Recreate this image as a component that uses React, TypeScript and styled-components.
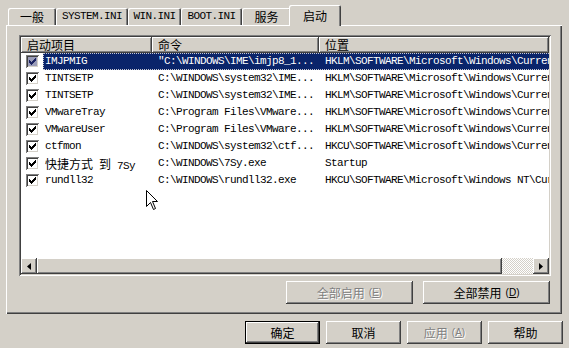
import React from 'react';
import styled, { createGlobalStyle, css } from 'styled-components';

const GlobalStyle = createGlobalStyle`
  html, body {
    margin: 0;
    padding: 0;
    background: #d4d0c8;
  }
  body {
    font-family: 'Noto Sans CJK SC', 'Liberation Sans', sans-serif;
    font-size: 12px;
    color: #000;
  }
`;

const mono = css`
  font-family: 'Liberation Mono', 'Noto Sans CJK SC', monospace;
  font-size: 11px;
  letter-spacing: -0.6px;
`;

const raised = css`
  box-shadow: inset -1px -1px #404040, inset 1px 1px #ffffff,
    inset -2px -2px #808080, inset 2px 2px #d4d0c8;
`;

const Page = styled.div`
  position: relative;
  width: 569px;
  height: 348px;
  padding-left: 6px;
  box-sizing: border-box;
  overflow: hidden;
  background: #d4d0c8;
`;

const TabStrip = styled.div`
  display: flex;
  align-items: flex-end;
  height: 25px;
  padding-left: 2px;
`;

const Tab = styled.div<{ $width: number; $active?: boolean }>`
  ${mono};
  position: relative;
  z-index: ${(p) => (p.$active ? 1 : 0)};
  box-sizing: border-box;
  width: ${(p) => p.$width + (p.$active ? 4 : 0)}px;
  height: ${(p) => (p.$active ? 21 : 17)}px;
  margin: ${(p) => (p.$active ? '0 -2px -1px -2px' : '0')};
  padding-top: ${(p) => (p.$active ? 3 : 1)}px;
  display: flex;
  justify-content: center;
  line-height: 15px;
  background: #d4d0c8;
  border-top-left-radius: 2px;
  border-top-right-radius: 2px;
  box-shadow: inset 1px 1px #ffffff, inset -1px 0 #404040, inset -2px 0 #808080;
`;

const Cjk = styled.span`
  font-family: 'Noto Sans CJK SC', sans-serif;
  font-size: 12px;
  letter-spacing: 0;
`;

const Panel = styled.div`
  width: 556px;
  height: 289px;
  box-sizing: border-box;
  padding: 10px 11px 10px 13px;
  display: flex;
  flex-direction: column;
  box-shadow: inset 1px 1px #ffffff, inset -1px -1px #404040,
    inset -2px -2px #808080;
`;

const ListView = styled.div`
  width: 532px;
  height: 241px;
  box-sizing: border-box;
  padding: 2px;
  display: flex;
  flex-direction: column;
  background: #d4d0c8;
  box-shadow: inset 1px 1px #808080, inset -1px -1px #ffffff,
    inset 2px 2px #404040, inset -2px -2px #d4d0c8;
`;

const ListInner = styled.div`
  flex: 1;
  display: flex;
  flex-direction: column;
  overflow: hidden;
  background: #ffffff;
`;

const HeaderRow = styled.div`
  display: flex;
  height: 16px;
  flex-shrink: 0;
`;

const HeaderCell = styled.div<{ $width?: number }>`
  box-sizing: border-box;
  ${(p) => (p.$width ? `width: ${p.$width}px;` : 'flex: 1;')}
  padding-left: 6px;
  line-height: 16px;
  background: #d4d0c8;
  white-space: nowrap;
  ${raised};
`;

const Rows = styled.div`
  flex: 1;
`;

const Row = styled.div`
  display: flex;
  height: 17px;
  white-space: nowrap;
`;

const CheckCell = styled.div`
  width: 22px;
  flex-shrink: 0;
  display: flex;
  align-items: center;
  padding-left: 5px;
  box-sizing: border-box;
`;

const CheckBox = styled.div<{ $dim?: boolean }>`
  width: 13px;
  height: 13px;
  box-sizing: border-box;
  display: flex;
  align-items: center;
  justify-content: center;
  background: ${(p) => (p.$dim ? '#9a9cb8' : '#ffffff')};
  color: ${(p) => (p.$dim ? '#1c2462' : '#000000')};
  box-shadow: inset 1px 1px #808080, inset -1px -1px #ffffff,
    inset 2px 2px #404040, inset -2px -2px #d4d0c8;
`;

const RowBody = styled.div<{ $selected?: boolean }>`
  flex: 1;
  display: flex;
  ${mono};
  line-height: 17px;
  background: ${(p) => (p.$selected ? '#0a246a' : 'transparent')};
  color: ${(p) => (p.$selected ? '#ffffff' : '#000000')};
  outline: ${(p) => (p.$selected ? '1px dotted #c8c8d0' : 'none')};
  outline-offset: -1px;
`;

const Cell = styled.div<{ $width?: number }>`
  box-sizing: border-box;
  ${(p) => (p.$width ? `width: ${p.$width}px; flex-shrink: 0;` : 'flex: 1;')}
  padding-left: ${(p) => (p.$width === 109 ? 2 : 6)}px;
  overflow: hidden;
`;

const HScroll = styled.div`
  display: flex;
  height: 16px;
  flex-shrink: 0;
  background: #d4d0c8;
`;

const ArrowBtn = styled.div`
  width: 16px;
  height: 16px;
  display: flex;
  align-items: center;
  justify-content: center;
  ${raised};
`;

const Thumb = styled.div<{ $width: number }>`
  width: ${(p) => p.$width}px;
  height: 16px;
  ${raised};
  background: #d4d0c8;
`;

const Track = styled.div`
  flex: 1;
  background: repeating-conic-gradient(#ffffff 0 25%, #d4d0c8 0 50%) 0 0 / 2px 2px;
`;

const ActionRow = styled.div`
  display: flex;
  justify-content: flex-end;
  gap: 10px;
  margin-top: 5px;
  padding-right: 1px;
`;

const Button = styled.div<{ $width: number; $default?: boolean; $disabled?: boolean }>`
  box-sizing: border-box;
  width: ${(p) => p.$width}px;
  height: 23px;
  display: flex;
  align-items: center;
  justify-content: center;
  line-height: 14px;
  background: #d4d0c8;
  color: ${(p) => (p.$disabled ? '#808080' : '#000000')};
  text-shadow: ${(p) => (p.$disabled ? '1px 1px #ffffff' : 'none')};
  ${(p) =>
    p.$default
      ? css`
          box-shadow: inset 0 0 0 1px #000000, inset -2px -2px #404040,
            inset 2px 2px #ffffff, inset -3px -3px #808080;
        `
      : raised};
`;

const Key = styled.span`
  font-family: 'Liberation Sans', sans-serif;
  font-size: 10px;
  margin-left: 4px;
`;

const Footer = styled.div`
  width: 557px;
  display: flex;
  justify-content: flex-end;
  gap: 6px;
  margin-top: 7px;
`;

const Cursor = styled.svg`
  position: absolute;
  left: 146px;
  top: 190px;
`;

// classic 7x7 pixel check mark
const Check = () => (
  <svg width="7" height="7" viewBox="0 0 7 7" shapeRendering="crispEdges">
    <path
      d="M0 2h1v1h1v1h1v-1h1v-1h1v-1h1v-1h1v3h-1v1h-1v1h-1v1h-1v1h-1v-1h-1v-1h-1v-1h-1z"
      fill="currentColor"
    />
  </svg>
);

const Arrow = ({ dir }: { dir: 'left' | 'right' }) => (
  <svg width="4" height="7" viewBox="0 0 4 7">
    <path d={dir === 'left' ? 'M4 0 L0 3.5 L4 7 Z' : 'M0 0 L4 3.5 L0 7 Z'} fill="#000" />
  </svg>
);

interface Item {
  name: React.ReactNode;
  cmd: string;
  loc: string;
}

const RUN_LM = 'HKLM\\SOFTWARE\\Microsoft\\Windows\\CurrentVersion\\Run';
const RUN_CU = 'HKCU\\SOFTWARE\\Microsoft\\Windows\\CurrentVersion\\Run';

const items: Item[] = [
  { name: 'IMJPMIG', cmd: '"C:\\WINDOWS\\IME\\imjp8_1...', loc: RUN_LM },
  { name: 'TINTSETP', cmd: 'C:\\WINDOWS\\system32\\IME...', loc: RUN_LM },
  { name: 'TINTSETP', cmd: 'C:\\WINDOWS\\system32\\IME...', loc: RUN_LM },
  { name: 'VMwareTray', cmd: 'C:\\Program Files\\VMware...', loc: RUN_LM },
  { name: 'VMwareUser', cmd: 'C:\\Program Files\\VMware...', loc: RUN_LM },
  { name: 'ctfmon', cmd: 'C:\\WINDOWS\\system32\\ctf...', loc: RUN_CU },
  {
    name: (
      <>
        <Cjk>快捷方式</Cjk> <Cjk>到</Cjk> 7Sy
      </>
    ),
    cmd: 'C:\\WINDOWS\\7Sy.exe',
    loc: 'Startup',
  },
  {
    name: 'rundll32',
    cmd: 'C:\\WINDOWS\\rundll32.exe',
    loc: 'HKCU\\SOFTWARE\\Microsoft\\Windows NT\\CurrentVersion\\Windows',
  },
];

const tabs = [
  { label: <Cjk>一般</Cjk>, width: 48 },
  { label: 'SYSTEM.INI', width: 72 },
  { label: 'WIN.INI', width: 53 },
  { label: 'BOOT.INI', width: 61 },
  { label: <Cjk>服务</Cjk>, width: 49 },
  { label: <Cjk>启动</Cjk>, width: 48, active: true },
];

const App: React.FC = () => (
  <Page>
    <GlobalStyle />
    <TabStrip>
      {tabs.map((t, i) => (
        <Tab key={i} $width={t.width} $active={t.active}>
          {t.label}
        </Tab>
      ))}
    </TabStrip>
    <Panel>
      <ListView>
        <ListInner>
          <HeaderRow>
            <HeaderCell $width={131}>启动项目</HeaderCell>
            <HeaderCell $width={167}>命令</HeaderCell>
            <HeaderCell>位置</HeaderCell>
          </HeaderRow>
          <Rows>
            {items.map((it, i) => (
              <Row key={i}>
                <CheckCell>
                  <CheckBox $dim={i === 0}>
                    <Check />
                  </CheckBox>
                </CheckCell>
                <RowBody $selected={i === 0}>
                  <Cell $width={109}>{it.name}</Cell>
                  <Cell $width={167}>{it.cmd}</Cell>
                  <Cell>{it.loc}</Cell>
                </RowBody>
              </Row>
            ))}
          </Rows>
          <HScroll>
            <ArrowBtn>
              <Arrow dir="left" />
            </ArrowBtn>
            <Thumb $width={465} />
            <Track />
            <ArrowBtn>
              <Arrow dir="right" />
            </ArrowBtn>
          </HScroll>
        </ListInner>
      </ListView>
      <ActionRow>
        <Button $width={127} $disabled>
          全部启用<Key>(<u>E</u>)</Key>
        </Button>
        <Button $width={127}>
          全部禁用<Key>(<u>D</u>)</Key>
        </Button>
      </ActionRow>
    </Panel>
    <Footer>
      <Button $width={75} $default>
        确定
      </Button>
      <Button $width={75}>取消</Button>
      <Button $width={75} $disabled>
        应用<Key>(<u>A</u>)</Key>
      </Button>
      <Button $width={75}>帮助</Button>
    </Footer>
    <Cursor width="12" height="20" viewBox="0 0 12 20">
      <path
        d="M0.5 0.5 L0.5 16.5 L4.5 12.5 L7.5 19.5 L9.5 18.5 L6.5 11.5 L11.5 11.5 Z"
        fill="#ffffff"
        stroke="#000000"
        strokeWidth="1"
      />
    </Cursor>
  </Page>
);

export default App;
